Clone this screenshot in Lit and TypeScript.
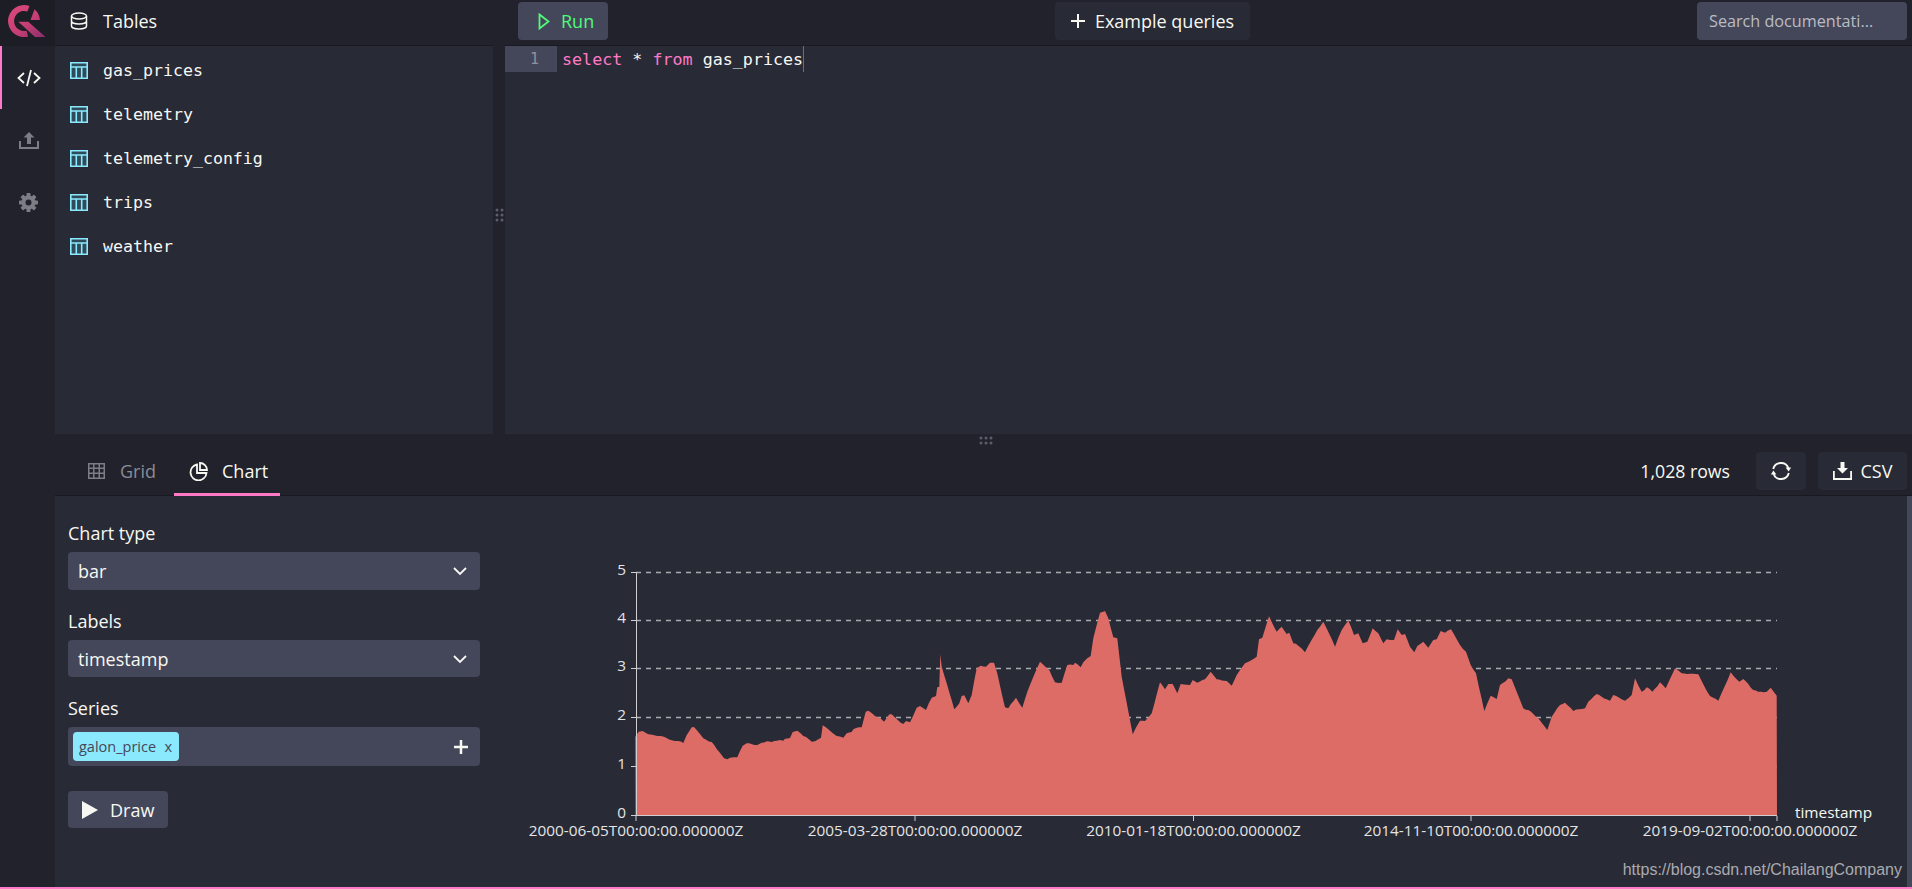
import { LitElement, html, css, svg } from "lit";
import { customElement } from "lit/decorators.js";

const seg6 = [346,560,356,545,368,543,385,553,400,555,412,558,432,560,455,571,475,573,490,579,500,555,515,532,522,531,550,565,575,576,590,597,612,625,622,628,630,623,652,622,668,587,680,580,712,585,725,578,770,572,790,572,795,566,810,564,818,546,832,542,850,558,875,575,885,574,903,563,908,526,925,538,950,558,970,563,980,550,995,546,1000,538,1025,532,1037,485,1045,482,1065,498,1080,503,1092,515,1108,493,1115,493,1150,522,1158,513,1170,517,1190,473,1200,468,1218,480,1235,443,1248,438,1252,412,1258,410,1261,313,1265,350,1280,400,1303,478,1318,460,1325,438,1333,436,1345,460];
const seg7 = [35,435,50,355,62,347,78,350,90,338,102,338,112,370,135,472,145,475,168,443,187,473,203,422,240,335,268,360,285,397,305,398,322,345,340,345,345,338,362,352,370,337,392,318,400,265,420,188,435,183,445,205,460,262,472,265,485,380,518,553,540,512,555,513,575,490,600,397,615,418,625,402,638,402,652,430,662,402,690,405,698,390,712,398,735,388,752,365,770,388,800,393,815,407,830,375,855,340,890,320,897,268,907,263,927,199,950,245,965,230,980,252,988,248,1000,280,1015,287,1035,307,1045,287,1072,240,1090,215,1125,290,1145,240,1165,212,1182,255,1195,250,1208,280,1222,275,1238,235,1255,250,1270,280,1280,268,1302,270,1313,238,1325,255,1335,252];
const seg8 = [30,290,43,307,52,288,70,275,85,293,100,270,110,268,122,243,135,248,153,238,180,285,198,305,212,345,228,370,253,483,272,437,290,447,300,405,325,385,335,388,350,425,370,475,385,480,415,505,442,540,455,500,480,465,495,458,520,483,555,475,565,455,590,432,630,452,640,435,675,452,695,435,705,385,725,425,740,412,757,425,780,397,797,415,825,355,845,370,895,373,930,438,955,452,992,367,1018,395,1030,387,1060,420,1075,425,1100,425,1112,413,1130,437];

function pts(seg: number[], ox: number) {
  const out: [number, number][] = [];
  for (let i = 0; i < seg.length; i += 2) out.push([ox + seg[i] / 3, 550 + seg[i + 1] / 3]);
  return out;
}
const all = [...pts(seg6, 520), ...pts(seg7, 960), ...pts(seg8, 1400)];
/* The price series is daily-ish and ragged: fill each traced span with small steps. */
function ragged(p: [number, number][]) {
  const out: string[] = [];
  for (let i = 0; i < p.length - 1; i++) {
    const [x0, y0] = p[i];
    const [x1, y1] = p[i + 1];
    const n = Math.max(1, Math.floor((x1 - x0) / 2.5));
    for (let k = 0; k < n; k++) {
      const t = k / n;
      const x = x0 + (x1 - x0) * t;
      const wob = k === 0 ? 0 : 0.5 * Math.sin(x * 1.9) + 0.3 * Math.sin(x * 4.3);
      out.push(`${x.toFixed(1)},${(y0 + (y1 - y0) * t + wob).toFixed(1)}`);
    }
  }
  const last = p[p.length - 1];
  out.push(`${last[0].toFixed(1)},${last[1].toFixed(1)}`);
  return out;
}
const area = `M635.5,815.5 L${ragged(all).join(" L")} L1777,815.5 Z`;

const tables = ["gas_prices", "telemetry", "telemetry_config", "trips", "weather"];
const gridY = [572, 620, 668, 717, 766];
const yLabels = [[5, 572], [4, 620], [3, 668], [2, 717], [1, 766], [0, 815]] as const;
const xLabels = [
  [636, "2000-06-05T00:00:00.000000Z"],
  [915, "2005-03-28T00:00:00.000000Z"],
  [1193.5, "2010-01-18T00:00:00.000000Z"],
  [1471, "2014-11-10T00:00:00.000000Z"],
  [1750, "2019-09-02T00:00:00.000000Z"],
] as const;
const xTicks = [636, 915, 1193.5, 1471, 1750, 1777];
const gearTeeth = [0, 45, 90, 135];

const chevron = html`<svg class="chev" viewBox="0 0 16 16"><path d="M2 5l6 6 6-6" fill="none" stroke="#f8f8f2" stroke-width="1.8"/></svg>`;
const tableIcon = html`<svg class="ticon" viewBox="0 0 18 17"><path fill="#2f4a58" d="M0 0h18v17H0z"/><path fill="none" stroke="#8be9fd" stroke-width="1.6" d="M.8.8h16.400v15.400H.8zM.8 5h16.400M6.300 5v11M11.700 5v11"/></svg>`;

@customElement("app-root")
export class AppRoot extends LitElement {
  static styles = css`
    :host { display: block; width: 100%; height: 889px; overflow: hidden; font-family: "Open Sans", sans-serif; font-size: 18px; color: #f8f8f2; }
    * { box-sizing: border-box; }
    .app { position: relative; display: flex; height: 889px; background: #21222c; border-bottom: 2px solid #ff79c6; }
    .side { width: 55px; flex: none; display: flex; flex-direction: column; background: #21222c; }
    .logo { height: 46px; background: #1c1d25; display: flex; padding: 5px 0 0 8px; }
    .logo svg { width: 39px; height: 33px; }
    .nav { height: 62px; display: flex; align-items: center; justify-content: center; border-left: 2px solid transparent; }
    .nav.active { height: 63px; border-left-color: #ff79c6; }
    .main { flex: 1; min-width: 0; display: flex; flex-direction: column; }
    .top { height: 434px; display: flex; flex: none; }
    .tables { width: 438px; flex: none; display: flex; flex-direction: column; }
    .head { height: 46px; flex: none; display: flex; align-items: center; background: #21222c; border-bottom: 1px solid #191a21; padding-bottom: 3px; }
    .tables .head { padding-left: 15px; gap: 15px; }
    .list { flex: 1; background: #282a36; padding-top: 4px; }
    .row { height: 44px; display: flex; align-items: center; padding: 0 0 4px 15px; gap: 15px; font-family: "DejaVu Sans Mono", monospace; font-size: 16.600px; }
    .ticon { width: 18px; height: 17px; flex: none; }
    .vsplit { width: 12px; flex: none; display: flex; align-items: center; justify-content: center; background: #21222c; padding-bottom: 4px; }
    .editor { flex: 1; min-width: 0; display: flex; flex-direction: column; }
    .editor .head { justify-content: space-between; padding: 0 5px 3px 13px; }
    .btn { height: 38px; border-radius: 4px; display: flex; align-items: center; background: #44475a; }
    .run { width: 90px; padding-left: 20px; gap: 11px; color: #50fa7b; }
    .ex { width: 195px; background: #282a36; justify-content: center; gap: 10px; }
    .search { width: 210px; color: #bbbcc4; padding-left: 12px; white-space: nowrap; font-size: 16.200px; }
    .code { flex: 1; background: #282a36; display: flex; align-items: flex-start; font-family: "DejaVu Sans Mono", monospace; font-size: 16.700px; }
    .gutter { width: 52px; height: 26px; background: #44475a; color: #8f909c; text-align: right; padding-right: 18px; line-height: 26px; font-size: 15px; }
    .line { margin-left: 5px; line-height: 26px; border-right: 1.500px solid #6b6d7c; white-space: pre; }
    .kw { color: #ff79c6; }
    .hsplit { height: 12px; flex: none; display: flex; align-items: center; justify-content: center; background: #21222c; padding-left: 5px; }
    .tabs { height: 50px; flex: none; display: flex; align-items: stretch; background: #21222c; border-bottom: 1px solid #191a21; padding-left: 19px; }
    .tab { display: flex; align-items: center; padding: 0 18px 0 14px; gap: 15px; color: #8a8b94; }
    .tab.on { color: #f8f8f2; border-bottom: 3px solid #ff79c6; margin-bottom: -1px; padding: 3px 12px 0 15px; gap: 14px; }
    .spacer { flex: 1; }
    .count { align-self: center; margin-right: 26px; font-size: 17.700px; }
    .actions { display: flex; align-items: center; gap: 12px; padding-right: 5px; }
    .dark { background: #282a36; justify-content: center; gap: 9px; }
    .refresh { width: 50px; }
    .csv { width: 89px; }
    .bottom { flex: 1; min-height: 0; display: flex; background: #282a36; position: relative; }
    .form { width: 438px; flex: none; padding: 24px 0 0 13px; }
    .label { height: 27px; line-height: 27px; margin-bottom: 5px; }
    .sel { width: 412px; border-radius: 4px; background: #44475a; display: flex; align-items: center; justify-content: space-between; padding: 0 12px 0 10px; margin-bottom: 18px; }
    .chev { width: 16px; height: 16px; }
    .sel1 { height: 38px; }
    .sel2 { height: 37px; }
    .sel3 { height: 39px; padding-left: 5px; padding-right: 12px; margin-bottom: 25px; }
    .chip { height: 29px; width: 106px; border-radius: 4px; background: #8be9fd; color: #44475a; font-size: 14.500px; display: flex; align-items: center; justify-content: space-between; padding: 0 7px 0 6px; }
    .draw { width: 100px; height: 37px; padding-left: 14px; gap: 12px; }
    .canvas { flex: 1; min-width: 0; }
    .canvas svg { display: block; width: 1414px; height: 390px; }
    .canvas text { font-family: "Open Sans", sans-serif; font-size: 15.350px; fill: #e4e4e4; }
    .canvas .axis-name { fill: #f8f8f2; }
    .scroll { width: 5px; flex: none; background: #44475a; }
    .mark { position: absolute; right: 10px; bottom: 8px; font-family: "Liberation Sans", sans-serif; font-size: 16px; color: #a9aab0; background: #282a36; }
  `;

  render() {
    return html`
      <div class="app">
        <div class="side">
          <div class="logo">
            <svg viewBox="0 0 39 33">
              <defs><linearGradient id="lg" x1="0" y1="0" x2="1" y2="1"><stop offset="0" stop-color="#dc4a7c"/><stop offset=".55" stop-color="#c63f74"/><stop offset="1" stop-color="#8a2d6d"/></linearGradient></defs>
              <path fill="url(#lg)" d="M21.500 1A16 16 0 1 0 20.100 31.500L18.600 25.700A10 10 0 1 1 19.400 6.600zM26.500 4.200A16 16 0 0 1 32 15H22.500zM10.300 16.700H20.300L37.500 32H27z"/>
            </svg>
          </div>
          <div class="nav active">
            <svg width="24" height="20" viewBox="0 0 24 20"><path d="M7 5l-5.500 5L7 15M17 5l5.500 5-5.500 5M14 2l-4 16" fill="none" stroke="#f8f8f2" stroke-width="1.800"/></svg>
          </div>
          <div class="nav">
            <svg width="20" height="17" viewBox="0 0 20 17"><path fill="#7d7e85" d="M10 0l5.500 5.500h-3.500V12H8V5.500H4.500zM0 9h2v6h16V9h2v8H0z"/></svg>
          </div>
          <div class="nav">
            <svg width="19" height="19" viewBox="0 0 19 19">
              <g fill="#7d7e85">
                <circle cx="9.500" cy="9.500" r="7"/>
                ${gearTeeth.map((a) => svg`<rect x="7.500" y="0" width="4" height="19" rx=".8" transform="rotate(${a} 9.500 9.500)"/>`)}
              </g>
              <circle cx="9.500" cy="9.500" r="3" fill="#21222c"/>
            </svg>
          </div>
        </div>
        <div class="main">
          <div class="top">
            <div class="tables">
              <div class="head">
                <svg width="18" height="18" viewBox="0 0 18 18"><g fill="none" stroke="#f8f8f2" stroke-width="1.500"><ellipse cx="9" cy="4" rx="7.500" ry="3"/><path d="M1.500 4v10c0 1.700 3.400 3 7.500 3s7.500-1.300 7.500-3V4M1.500 9c0 1.700 3.400 3 7.500 3s7.500-1.300 7.500-3"/></g></svg>
                <span>Tables</span>
              </div>
              <div class="list">
                ${tables.map((t) => html`<div class="row">${tableIcon}<span>${t}</span></div>`)}
              </div>
            </div>
            <div class="vsplit">
              <svg width="9" height="14" viewBox="0 0 9 14"><g fill="#5b5d6b"><circle cx="2" cy="2" r="1.500"/><circle cx="7" cy="2" r="1.500"/><circle cx="2" cy="7" r="1.500"/><circle cx="7" cy="7" r="1.500"/><circle cx="2" cy="12" r="1.500"/><circle cx="7" cy="12" r="1.500"/></g></svg>
            </div>
            <div class="editor">
              <div class="head">
                <div class="btn run">
                  <svg width="12" height="17" viewBox="0 0 12 17"><path d="M1.500 1.500l9 7-9 7z" fill="none" stroke="#50fa7b" stroke-width="1.800"/></svg>
                  <span>Run</span>
                </div>
                <div class="btn ex">
                  <svg width="14" height="14" viewBox="0 0 14 14"><path d="M7 0v14M0 7h14" stroke="#f8f8f2" stroke-width="2"/></svg>
                  <span>Example queries</span>
                </div>
                <div class="btn search">Search documentati...</div>
              </div>
              <div class="code">
                <div class="gutter">1</div>
                <div class="line"><span class="kw">select</span> * <span class="kw">from</span> gas_prices</div>
              </div>
            </div>
          </div>
          <div class="hsplit">
            <svg width="14" height="9" viewBox="0 0 14 9"><g fill="#5b5d6b"><circle cx="2" cy="2" r="1.500"/><circle cx="7" cy="2" r="1.500"/><circle cx="12" cy="2" r="1.500"/><circle cx="2" cy="7" r="1.500"/><circle cx="7" cy="7" r="1.500"/><circle cx="12" cy="7" r="1.500"/></g></svg>
          </div>
          <div class="tabs">
            <div class="tab">
              <svg width="17" height="16" viewBox="0 0 17 16"><path fill="#7d7e85" fill-rule="evenodd" d="M0 0h17v16H0zM1.500 1.500v3h3.500v-3zM6.500 1.500v3h4v-3zM12 1.500v3h3.500v-3zM1.500 6v3.500h3.500V6zM6.500 6v3.500h4V6zM12 6v3.500h3.500V6zM1.500 11v3.500h3.500V11zM6.500 11v3.500h4V11zM12 11v3.500h3.500V11z"/></svg>
              <span>Grid</span>
            </div>
            <div class="tab on">
              <svg width="19" height="19" viewBox="0 0 19 19"><g fill="none" stroke="#f8f8f2" stroke-width="1.800"><path d="M8 2.500A8 8 0 1 0 17.500 11H8z"/><path d="M11 1a7 7 0 0 1 7 7h-7z"/></g></svg>
              <span>Chart</span>
            </div>
            <div class="spacer"></div>
            <div class="count">1,028 rows</div>
            <div class="actions">
              <div class="btn dark refresh">
                <svg width="20" height="20" viewBox="0 0 20 20"><g fill="none" stroke="#f8f8f2" stroke-width="1.900"><path d="M2.200 8A8 8 0 0 1 17.400 7M17.800 12A8 8 0 0 1 2.600 13"/></g><path fill="#f8f8f2" d="M14.600 6.500h5.600L17.600 10.500zM-.2 13.500h5.600L2.400 9.500z"/></svg>
              </div>
              <div class="btn dark csv">
                <svg width="19" height="18" viewBox="0 0 19 18"><path fill="#f8f8f2" d="M7.500 0h4v6h3.500L9.500 11.500 4 6h3.500zM0 9h1.800v7h15.400V9H19v9H0z"/></svg>
                <span>CSV</span>
              </div>
            </div>
          </div>
          <div class="bottom">
            <div class="form">
              <div class="label">Chart type</div>
              <div class="sel sel1"><span>bar</span>${chevron}</div>
              <div class="label">Labels</div>
              <div class="sel sel2"><span>timestamp</span>${chevron}</div>
              <div class="label">Series</div>
              <div class="sel sel3">
                <div class="chip"><span>galon_price</span><span>x</span></div>
                <svg width="14" height="14" viewBox="0 0 14 14"><path d="M7 0v14M0 7h14" stroke="#f8f8f2" stroke-width="2.500"/></svg>
              </div>
              <div class="btn draw">
                <svg width="16" height="18" viewBox="0 0 16 18"><path d="M0 0l16 9-16 9z" fill="#f8f8f2"/></svg>
                <span>Draw</span>
              </div>
            </div>
            <div class="canvas">
              <svg viewBox="493 496 1414 390">
                ${gridY.map((y) => svg`<line x1="636" x2="1777" y1=${y + 0.5} y2=${y + 0.5} stroke="#a9aab0" stroke-width="1.300" stroke-dasharray="5 5"/>`)}
                <path d=${area} fill="#dd6b66"/>
                <line x1="636" x2="1777" y1="815.500" y2="815.500" stroke="#cfcfd2"/>
                <line x1="636.500" x2="636.500" y1="572" y2="816" stroke="#cfcfd2"/>
                ${yLabels.map(([n, y]) => svg`
                  <line x1="631" x2="636" y1=${y + 0.5} y2=${y + 0.5} stroke="#cfcfd2"/>
                  <text x="626" y=${y + 3} text-anchor="end">${n}</text>`)}
                ${xTicks.map((x) => svg`<line x1=${x} x2=${x} y1="816" y2="821" stroke="#cfcfd2"/>`)}
                ${xLabels.map(([x, t]) => svg`<text x=${x} y="836" text-anchor="middle">${t}</text>`)}
                <text class="axis-name" x="1795" y="818">timestamp</text>
              </svg>
            </div>
            <div class="scroll"></div>
            <div class="mark">https://blog.csdn.net/ChailangCompany</div>
          </div>
        </div>
      </div>
    `;
  }
}
